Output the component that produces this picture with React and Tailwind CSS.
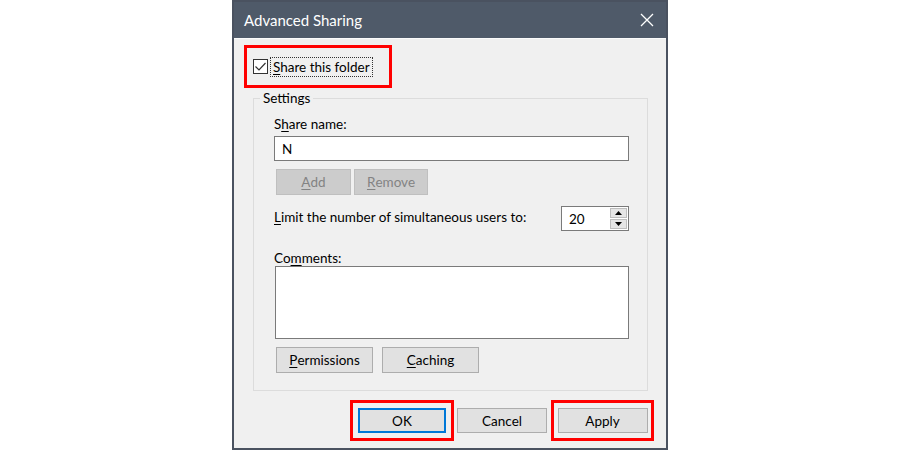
const font = { fontFamily: 'Lato, "Noto Sans", sans-serif' };

function Key({ children }) {
  return <span className="underline underline-offset-2">{children}</span>;
}

function Button({ children, className = "", disabled = false, focused = false }) {
  const base = disabled
    ? "bg-[#cccccc] border-[#bfbfbf] text-[#838383]"
    : focused
    ? "bg-[#e1e1e1] border-2 border-[#0078d7] text-black"
    : "bg-[#e1e1e1] border-[#adadad] text-black";
  return (
    <div className={`flex items-center justify-center border ${base} ${className}`}>
      {children}
    </div>
  );
}

function RedBox({ children, className = "" }) {
  return <div className={`border-[3px] border-[#ff0000] ${className}`}>{children}</div>;
}

export default function App() {
  return (
    <div className="w-[900px] h-[450px] bg-white flex justify-center text-[13.5px] leading-[18px] text-black" style={font}>
      <div className="w-[436px] h-[450px] border-2 border-[#4a5260] flex flex-col bg-[#f0f0f0]">
        {/* Title bar */}
        <div className="h-[36px] bg-[#4f5a69] flex items-center justify-between pl-[10px] pr-[12px] shrink-0">
          <span className="text-white text-[15px]">Advanced Sharing</span>
          <svg width="14" height="14" viewBox="0 0 14 14">
            <path d="M1 1 L13 13 M13 1 L1 13" stroke="#ffffff" strokeWidth="1.3" />
          </svg>
        </div>

        <div className="flex-1 border-t border-[#fbfbfb] pl-[10px] pt-[6px]">
          {/* Share this folder */}
          <RedBox className="w-[148px] h-[43px] flex items-center pl-[6px]">
            <div className="w-[15px] h-[15px] border border-[#333333] bg-white flex items-center justify-center">
              <svg width="11" height="9" viewBox="0 0 11 9">
                <path d="M0.5 4.5 L4 8 L10.5 1" fill="none" stroke="#333333" strokeWidth="1.2" />
              </svg>
            </div>
            <span className="ml-[3px] px-[2px] outline outline-1 outline-dotted outline-[#333333]">
              <Key>S</Key>hare this folder
            </span>
          </RedBox>

          {/* Settings group */}
          <fieldset className="ml-[9px] w-[395px] border border-[#dcdcdc] pl-[20px] pr-[18px] pt-[8px] pb-[17px] mt-[1px]">
            <legend className="ml-[-14px] px-[3px]">Settings</legend>

            <div>S<Key>h</Key>are name:</div>
            <div className="mt-[3px] h-[25px] border border-[#7a7a7a] bg-white flex items-center pl-[7px]">N</div>

            <div className="mt-[8px] ml-[2px] flex gap-[3px]">
              <Button disabled className="w-[75px] h-[26px]"><Key>A</Key>dd</Button>
              <Button disabled className="w-[74px] h-[26px]"><Key>R</Key>emove</Button>
            </div>

            <div className="mt-[11px] flex items-center justify-between">
              <span className="-mt-[3px]"><Key>L</Key>imit the number of simultaneous users to:</span>
              <div className="w-[68px] h-[25px] border border-[#7a7a7a] bg-white flex">
                <div className="flex-1 flex items-center pl-[7px]">20</div>
                <div className="w-[18px] flex flex-col py-[1px] pr-[1px] gap-[1px]">
                  <div className="flex-1 bg-[#e5e5e5] border border-[#bdbdbd] flex items-center justify-center">
                    <svg width="7" height="4" viewBox="0 0 7 4"><path d="M0 4 L3.5 0 L7 4 Z" fill="#000" /></svg>
                  </div>
                  <div className="flex-1 bg-[#e5e5e5] border border-[#bdbdbd] flex items-center justify-center">
                    <svg width="7" height="4" viewBox="0 0 7 4"><path d="M0 0 L3.5 4 L7 0 Z" fill="#000" /></svg>
                  </div>
                </div>
              </div>
            </div>

            <div className="mt-[18px]">Co<Key>m</Key>ments:</div>
            <div className="mt-[-1px] ml-[1px] h-[73px] border border-[#7a7a7a] bg-white"></div>

            <div className="mt-[8px] ml-[2px] flex gap-[9px]">
              <Button className="w-[97px] h-[26px]"><Key>P</Key>ermissions</Button>
              <Button className="w-[97px] h-[26px]"><Key>C</Key>aching</Button>
            </div>
          </fieldset>

          {/* Dialog buttons */}
          <div className="mt-[9px] flex items-center justify-end pr-[12px]">
            <RedBox className="w-[104px] h-[41px] flex items-center justify-center">
              <Button focused className="w-[88px] h-[25px]">OK</Button>
            </RedBox>
            <Button className="ml-[3px] w-[90px] h-[25px]">Cancel</Button>
            <RedBox className="ml-[4px] w-[103px] h-[41px] flex items-center justify-center">
              <Button className="w-[90px] h-[25px]">Apply</Button>
            </RedBox>
          </div>
        </div>
      </div>
    </div>
  );
}
